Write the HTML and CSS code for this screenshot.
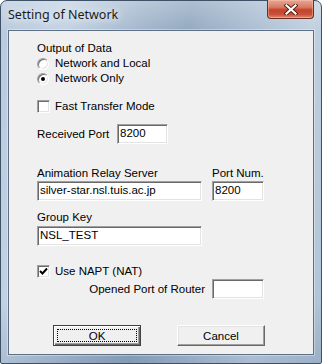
FILE: index.html
```html
<!DOCTYPE html>
<html lang="en">
<head>
    <meta charset="UTF-8" />
    <title>Setting of Network</title>
    <link rel="stylesheet" href="styles.css">
</head>
<body>

    <div class="window">
        <div class="titlebar">
            <span class="title">Setting of Network</span>
            <div class="close-btn">
                <svg width="14" height="11" viewBox="0 0 14 11">
                    <path d="M2.5 1.5 L11.5 9.5 M11.5 1.5 L2.5 9.5" stroke="#5a1a10" stroke-width="4" stroke-linecap="square" fill="none" />
                    <path d="M2.5 1.5 L11.5 9.5 M11.5 1.5 L2.5 9.5" stroke="#ffffff" stroke-width="2.2" stroke-linecap="square" fill="none" />
                </svg>
            </div>
        </div>

        <form class="client" action="#" onsubmit="return false">
            <div class="label">Output of Data</div>
            <div class="option"><span class="radio"></span>Network and Local</div>
            <div class="option"><span class="radio checked"></span>Network Only</div>

            <div class="option fast"><span class="check"></span>Fast Transfer Mode</div>

            <div class="row received">
                <span class="row-label">Received Port</span>
                <input type="text" class="field small" value="8200" />
            </div>

            <div class="row server-labels">
                <span class="wide">Animation Relay Server</span>
                <span>Port Num.</span>
            </div>
            <div class="row">
                <input type="text" class="field server" value="silver-star.nsl.tuis.ac.jp" />
                <input type="text" class="field port" value="8200" />
            </div>

            <div class="label group-label">Group Key</div>
            <input type="text" class="field server" value="NSL_TEST" />

            <div class="option napt">
                <span class="check">
                    <svg width="9" height="9" viewBox="0 0 9 9">
                        <path d="M1 4 L3.5 6.5 L8 1.5" stroke="#000" stroke-width="2" fill="none" />
                    </svg>
                </span>Use NAPT (NAT)
            </div>
            <div class="row router">
                <span class="wide right">Opened Port of Router</span>
                <input type="text" class="field port" value="" />
            </div>

            <div class="buttons">
                <button type="submit" class="btn default"><span class="focus">OK</span></button>
                <button type="button" class="btn">Cancel</button>
            </div>
        </form>
    </div>

</body>
</html>
```

FILE: styles.css
```css
body {
    margin: 0;
    background-color: #ffffff;
}

.window {
    width: 322px;
    height: 364px;
    box-sizing: border-box;
    padding: 29px 7px 8px 7px;
    border: 1px solid #3f5166;
    border-radius: 7px 7px 2px 2px;
    background:
        linear-gradient(to bottom, rgba(255,255,255,0.25), rgba(0,0,0,0) 30px, rgba(0,0,0,0) 300px, rgba(40,70,110,0.15)),
        linear-gradient(100deg, #b9cadd 0%, #c4d3e3 18%, #a2b6cc 38%, #93a9c1 50%, #aabdd2 66%, #c1d0e0 82%, #aec1d6 100%);
    position: relative;
    font-family: "Liberation Sans", Arial, sans-serif;
    font-size: 11.5px;
    color: #000;
}

.titlebar {
    position: absolute;
    top: 0;
    left: 0;
    right: 0;
    height: 28px;
}

.title {
    position: absolute;
    left: 7px;
    top: 5px;
    font-family: "Noto Sans", sans-serif;
    font-size: 12.5px;
    color: #1b1b1b;
    text-shadow: 0 0 6px #e8eef5, 0 0 10px #e8eef5;
}

.close-btn {
    position: absolute;
    left: 266px;
    top: -1px;
    width: 47px;
    height: 19px;
    box-sizing: border-box;
    border: 1px solid #6b2d22;
    border-top: none;
    border-radius: 0 0 4px 4px;
    background: linear-gradient(to bottom, #e8a898 0%, #d87a64 40%, #c4442a 55%, #c9503a 80%, #e28b6e 100%);
    box-shadow: inset 0 0 0 1px rgba(255,200,180,0.45);
    display: flex;
    align-items: center;
    justify-content: center;
}

.client {
    margin: 0;
    height: 100%;
    box-sizing: border-box;
    border: 1px solid #5d7086;
    box-shadow: 0 0 0 1px rgba(255,255,255,0.35);
    background-color: #f0f0f0;
    padding: 10px 0 0 28px;
}

.label {
    height: 14px;
    line-height: 14px;
}

.option {
    display: flex;
    align-items: center;
    height: 15px;
    line-height: 15px;
}

.label + .option {
    margin-top: 1px;
}

.radio {
    width: 12px;
    height: 12px;
    box-sizing: border-box;
    margin-right: 6px;
    border-radius: 50%;
    border: 1px solid;
    border-color: #a0a0a0 #ffffff #ffffff #a0a0a0;
    background-color: #ffffff;
    box-shadow: inset 1px 1px 0 #6d6d6d, inset -1px -1px 0 #e3e3e3;
    display: flex;
    align-items: center;
    justify-content: center;
}

.radio.checked::after {
    content: "";
    width: 4px;
    height: 4px;
    border-radius: 50%;
    background-color: #000;
}

.check {
    width: 13px;
    height: 13px;
    box-sizing: border-box;
    margin-right: 5px;
    border: 1px solid;
    border-color: #a0a0a0 #ffffff #ffffff #a0a0a0;
    background-color: #ffffff;
    box-shadow: inset 1px 1px 0 #6d6d6d, inset -1px -1px 0 #e3e3e3;
    display: flex;
    align-items: center;
    justify-content: center;
}

.check svg {
    display: block;
}

.fast {
    margin-top: 13px;
}

.row {
    display: flex;
    align-items: center;
}

.row-label {
    width: 80px;
}

.received {
    margin-top: 10px;
}

.server-labels {
    margin-top: 22px;
    height: 14px;
    line-height: 14px;
    margin-bottom: 1px;
}

.wide {
    width: 175px;
    box-sizing: border-box;
}

.right {
    text-align: right;
    padding-right: 7px;
}

.field {
    height: 20px;
    box-sizing: border-box;
    margin: 0;
    padding: 0 2px 3px 2px;
    border: 1px solid;
    border-color: #a0a0a0 #ffffff #ffffff #a0a0a0;
    box-shadow: inset 1px 1px 0 #696969, inset -1px -1px 0 #e3e3e3;
    background-color: #ffffff;
    font-family: "Liberation Sans", Arial, sans-serif;
    font-size: 11.5px;
    color: #000;
    outline: none;
    display: block;
}

.field.small {
    width: 51px;
}

.field.server {
    width: 165px;
    margin-right: 10px;
}

.field.port {
    width: 52px;
}

.group-label {
    margin-top: 9px;
    margin-bottom: 2px;
}

.napt {
    margin-top: 18px;
}

.buttons {
    display: flex;
    gap: 36px;
    margin-top: 26px;
    padding-left: 16px;
}

.btn {
    width: 88px;
    height: 21px;
    box-sizing: border-box;
    margin: 0;
    padding: 0;
    border: 1px solid;
    border-color: #ffffff #696969 #696969 #ffffff;
    box-shadow: inset -1px -1px 0 #a0a0a0, inset 1px 1px 0 #e3e3e3;
    background-color: #f0f0f0;
    font-family: "Liberation Sans", Arial, sans-serif;
    font-size: 11.5px;
    color: #000;
    cursor: pointer;
}

.btn.default {
    border: 1px solid #404040;
    box-shadow: inset 1px 1px 0 #ffffff, inset -1px -1px 0 #696969, inset -2px -2px 0 #a0a0a0;
    display: flex;
    padding: 3px;
}

.focus {
    flex: 1;
    border: 1px dotted #000;
    display: flex;
    align-items: center;
    justify-content: center;
}
```
